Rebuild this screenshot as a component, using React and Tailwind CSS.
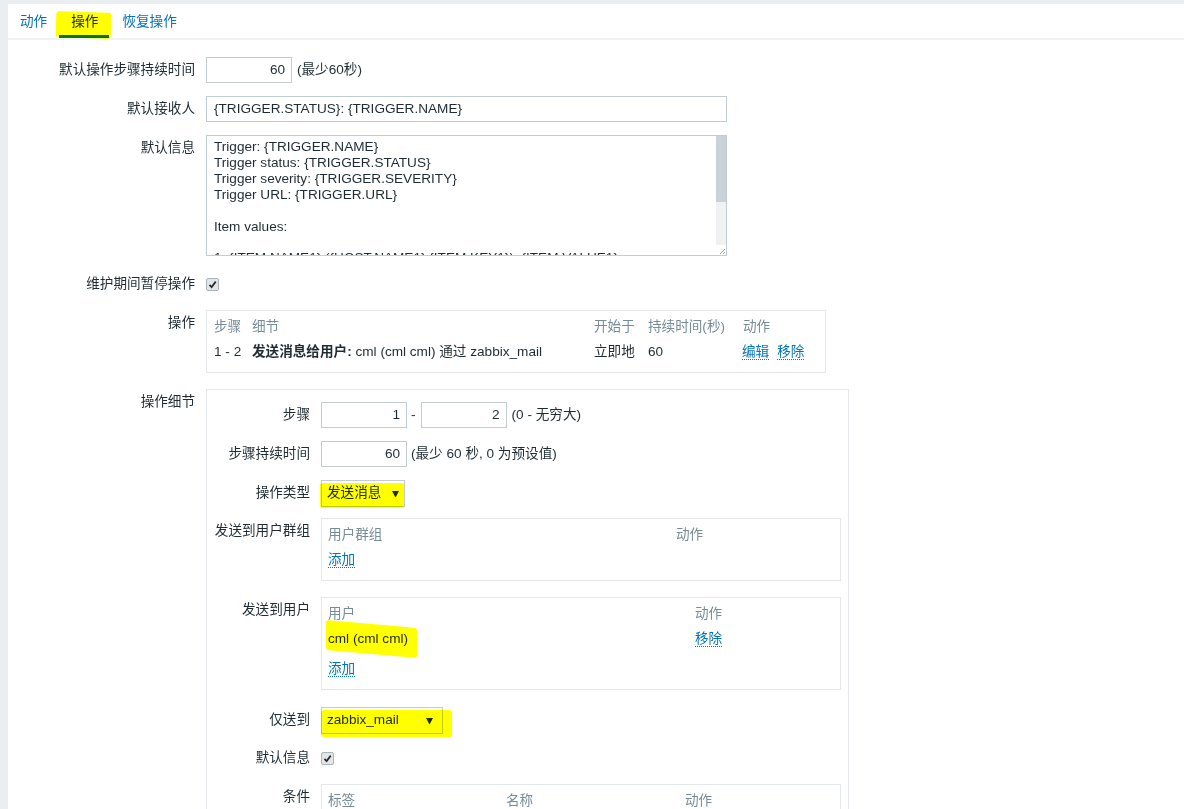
const F = "font-['Liberation_Sans','Noto_Sans_CJK_SC',sans-serif]";

function Link({ children }) {
  return (
    <span className="text-[#0275b8] border-b border-dotted border-[#0275b8] leading-[15px] inline-block">
      {children}
    </span>
  );
}

function Check() {
  return (
    <span className="inline-flex w-[13px] h-[13px] items-center justify-center rounded-[2px] border border-[#a9b4ba] bg-[#e2e6e8]">
      <svg viewBox="0 0 10 10" className="w-[9px] h-[9px]">
        <path d="M1.6 5.4 L4 7.9 L8.6 1.8" stroke="#2b2b2b" strokeWidth="1.9" fill="none" />
      </svg>
    </span>
  );
}

function Arrow() {
  return (
    <svg viewBox="0 0 8 9" className="w-[7px] h-[8px]">
      <path d="M0 1 L8 1 L4 8.5 Z" fill="#1f2c33" />
    </svg>
  );
}

function Hl({ className }) {
  return <span className={`absolute bg-[#ffff00] mix-blend-multiply pointer-events-none ${className}`} />;
}

function Row({ label, inner, className = "", children }) {
  return (
    <div className={`flex items-start ${className}`}>
      <div
        className={`${inner ? "w-[114px]" : "w-[198px]"} shrink-0 pr-[11px] text-right leading-[26px] text-[#1f2c33] whitespace-nowrap`}
      >
        {label}
      </div>
      <div className="min-w-0 flex items-center">{children}</div>
    </div>
  );
}

function Input({ value, className = "" }) {
  return (
    <div
      className={`h-[26px] border border-[#c3ccd1] bg-white flex items-center justify-end pr-[6px] ${className}`}
    >
      {value}
    </div>
  );
}

export default function App() {
  return (
    <div className={`w-[1184px] h-[809px] overflow-hidden bg-[#ebeef0] pt-[4px] pl-[8px] text-[13.6px] text-[#1f2c33] ${F}`}>
      <div className="bg-white h-full">
        {/* tabs */}
        <div className="h-[36px] border-b-[2px] border-[#f0f2f3] flex items-stretch whitespace-nowrap">
          <div className="px-[12px] pt-[9px] leading-[18px] text-[#0275b8]">动作</div>
          <div className="relative px-[12px] pt-[9px] leading-[18px]">
            操作
            <span className="absolute left-0 right-[1px] bottom-[0px] h-[3px] bg-[#0275b8]" />
            <Hl className="left-[-3px] right-[-1px] top-[8px] bottom-[0px] rounded-[3px] rotate-[1.5deg]" />
          </div>
          <div className="px-[12px] pt-[9px] leading-[18px] text-[#0275b8]">恢复操作</div>
        </div>

        <div className="pt-[17px]">
          <Row label="默认操作步骤持续时间">
            <Input value="60" className="w-[86px]" />
            <span className="ml-[5px]">(最少60秒)</span>
          </Row>

          <Row label="默认接收人" className="mt-[13px]">
            <div className="w-[521px] h-[26px] border border-[#c3ccd1] flex items-center pl-[7px]">
              {"{TRIGGER.STATUS}: {TRIGGER.NAME}"}
            </div>
          </Row>

          <Row label="默认信息" className="mt-[13px]">
            <div className="w-[521px] h-[121px] border border-[#c3ccd1] flex overflow-hidden">
              <div className="flex-1 pl-[7px] pt-[3px] leading-[15.9px] whitespace-pre overflow-hidden">
                {"Trigger: {TRIGGER.NAME}\nTrigger status: {TRIGGER.STATUS}\nTrigger severity: {TRIGGER.SEVERITY}\nTrigger URL: {TRIGGER.URL}\n\nItem values:\n\n1. {ITEM.NAME1} ({HOST.NAME1}:{ITEM.KEY1}): {ITEM.VALUE1}"}
              </div>
              <div className="w-[10px] flex flex-col bg-[#f0f1f2]">
                <div className="h-[66px] bg-[#c8d2d8]" />
                <div className="flex-1" />
                <div className="h-[10px] flex items-end justify-end bg-white">
                  <svg viewBox="0 0 10 10" className="w-[10px] h-[10px]">
                    <path d="M4 9 L9 4 M7 9 L9 7" stroke="#999" strokeWidth="1" />
                  </svg>
                </div>
              </div>
            </div>
          </Row>

          <Row label="维护期间暂停操作" className="mt-[15px]">
            <div className="h-[26px] flex items-center">
              <Check />
            </div>
          </Row>

          <Row label="操作" className="mt-[13px]">
            <div className="w-[620px] h-[63px] border border-[#e4e8ea] pl-[7px] pt-[6px]">
              <div className="flex h-[20px] items-center text-[#768d99]">
                <div className="w-[38px]">步骤</div>
                <div className="w-[342px]">细节</div>
                <div className="w-[54px]">开始于</div>
                <div className="w-[95px]">持续时间(秒)</div>
                <div>动作</div>
              </div>
              <div className="flex h-[20px] items-center mt-[5px]">
                <div className="w-[38px]">1 - 2</div>
                <div className="w-[342px]">
                  <b>发送消息给用户:</b> cml (cml cml) 通过 zabbix_mail
                </div>
                <div className="w-[54px]">立即地</div>
                <div className="w-[94px]">60</div>
                <div className="flex gap-[8px]">
                  <Link>编辑</Link>
                  <Link>移除</Link>
                </div>
              </div>
            </div>
          </Row>

          <Row label="操作细节" className="mt-[16px]">
            <div className="w-[643px] h-[460px] border border-[#e4e8ea] pt-[12px]">
              <Row label="步骤" inner>
                <Input value="1" className="w-[86px]" />
                <span className="ml-[4px] mr-[5px]">-</span>
                <Input value="2" className="w-[86px]" />
                <span className="ml-[5px]">(0 - 无穷大)</span>
              </Row>

              <Row label="步骤持续时间" inner className="mt-[13px]">
                <Input value="60" className="w-[86px]" />
                <span className="ml-[4px]">(最少 60 秒, 0 为预设值)</span>
              </Row>

              <Row label="操作类型" inner className="mt-[13px]">
                <div className="relative w-[84px] h-[27px] border border-[#c3ccd1] flex items-center justify-between pl-[5px] pr-[5px]">
                  <span>发送消息</span>
                  <Arrow />
                  <Hl className="left-[-2px] right-[0px] top-[2px] bottom-[-2px] rounded-[2px]" />
                </div>
              </Row>

              <Row label="发送到用户群组" inner className="mt-[11px]">
                <div className="w-[520px] h-[63px] border border-[#e4e8ea] pl-[6px] pt-[6px]">
                  <div className="flex h-[20px] items-center text-[#768d99]">
                    <div className="w-[348px]">用户群组</div>
                    <div>动作</div>
                  </div>
                  <div className="flex h-[20px] items-center mt-[5px]">
                    <Link>添加</Link>
                  </div>
                </div>
              </Row>

              <Row label="发送到用户" inner className="mt-[16px]">
                <div className="w-[520px] h-[93px] border border-[#e4e8ea] pl-[6px] pt-[6px]">
                  <div className="flex h-[20px] items-center text-[#768d99]">
                    <div className="w-[367px]">用户</div>
                    <div>动作</div>
                  </div>
                  <div className="flex h-[20px] items-center mt-[5px]">
                    <div className="w-[367px]">
                      <span className="relative">
                        cml (cml cml)
                        <Hl className="left-[-2px] right-[-9px] top-[-7px] bottom-[-8px] rounded-[3px] skew-y-[5deg]" />
                      </span>
                    </div>
                    <Link>移除</Link>
                  </div>
                  <div className="flex h-[20px] items-center mt-[10px]">
                    <Link>添加</Link>
                  </div>
                </div>
              </Row>

              <Row label="仅送到" inner className="mt-[17px]">
                <div className="relative w-[122px] h-[27px] border border-[#c3ccd1] flex items-center justify-between pl-[5px] pr-[9px]">
                  <span>zabbix_mail</span>
                  <Arrow />
                  <Hl className="left-[-1px] right-[-10px] top-[2px] bottom-[-4px] rounded-[3px]" />
                </div>
              </Row>

              <Row label="默认信息" inner className="mt-[11px]">
                <div className="h-[26px] flex items-center">
                  <Check />
                </div>
              </Row>

              <Row label="条件" inner className="mt-[13px]">
                <div className="w-[520px] h-[63px] border border-[#e4e8ea] pl-[6px] pt-[6px]">
                  <div className="flex h-[20px] items-center text-[#768d99]">
                    <div className="w-[178px]">标签</div>
                    <div className="w-[179px]">名称</div>
                    <div>动作</div>
                  </div>
                </div>
              </Row>
            </div>
          </Row>
        </div>
      </div>
    </div>
  );
}
